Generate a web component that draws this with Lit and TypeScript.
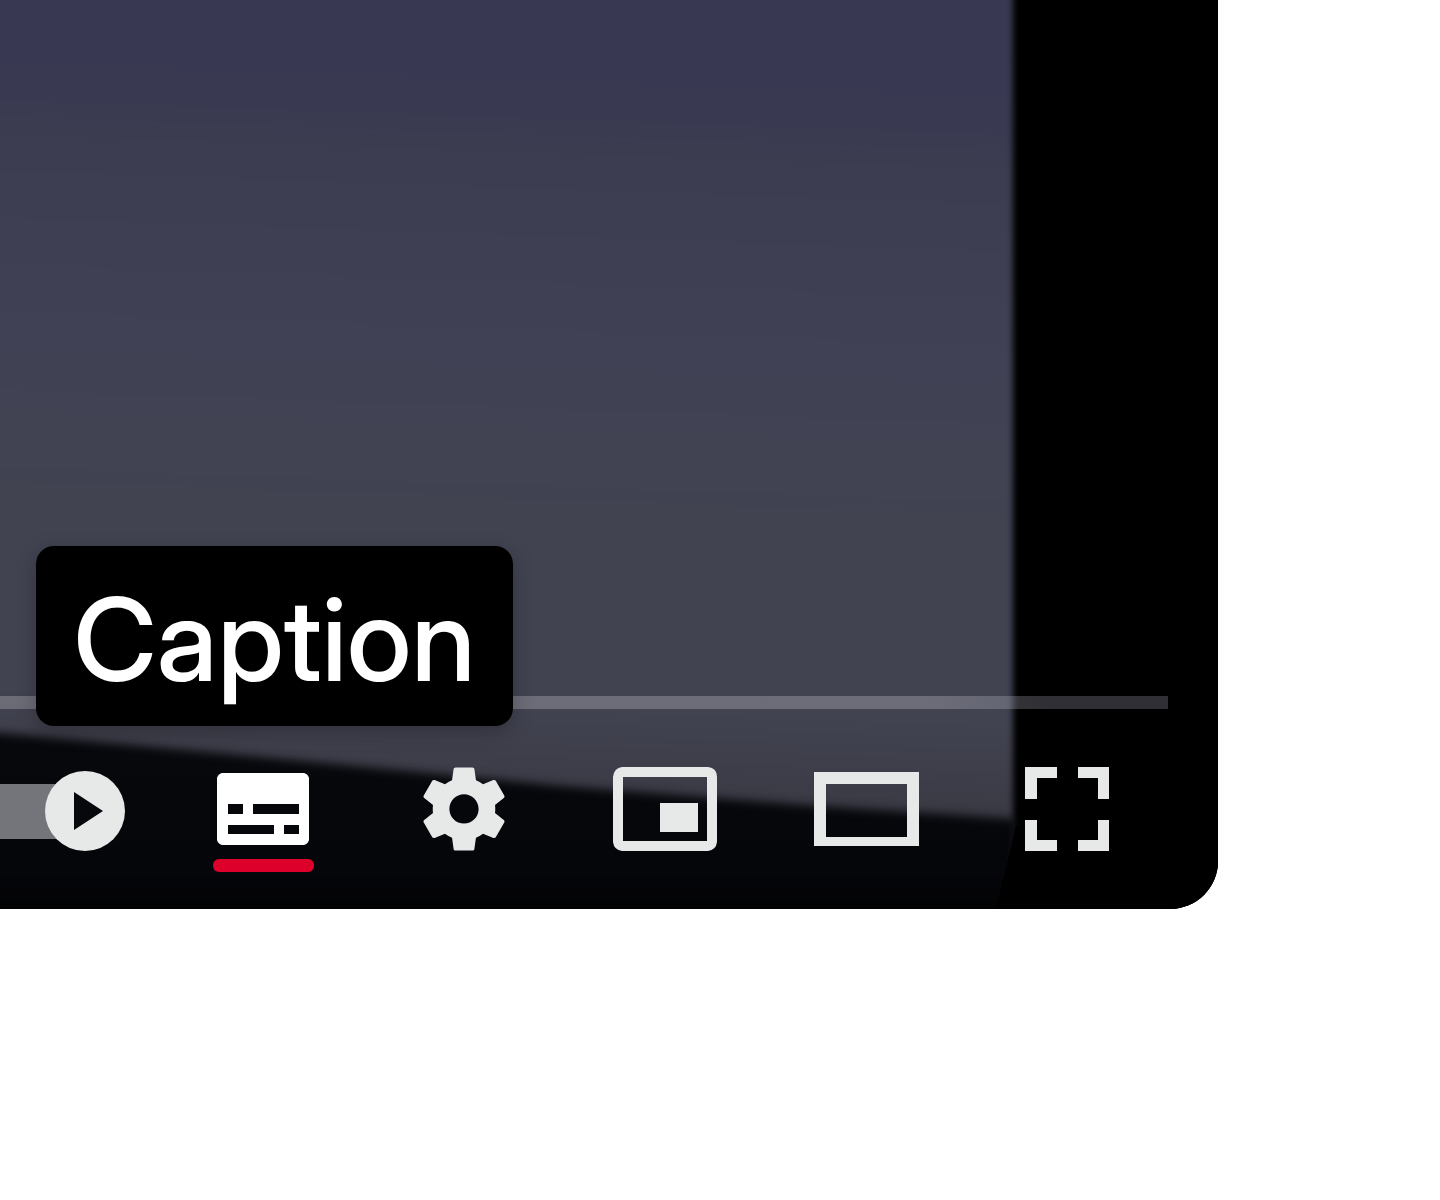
import { LitElement, html, css, svg } from "lit";
import { customElement, property } from "lit/decorators.js";

type IconName = "captions" | "settings" | "miniplayer" | "theater" | "fullscreen";

const icons = {
  captions: svg`
    <path class="bright" fill-rule="evenodd" d="M59 64h82q4 1 5 5v62q-1 4-5 5H59q-4-1-5-5V69q1-4 5-5z
      M65 95v10h15V95z M90 95v10h46V95z
      M65 116v9h46v-9z M121 116v9h15v-9z"/>
    <rect class="active" x="50" y="150" width="101" height="13" rx="6"/>`,
  settings: svg`
    <path transform="translate(100 100) scale(5.22) translate(-18 -18)" d="m 23.94,18.78 c .03,-0.25 .05,-0.51 .05,-0.78 0,-0.27 -0.02,-0.52 -0.05,-0.78 l 1.68,-1.32 c .15,-0.12 .19,-0.33 .09,-0.51 l -1.6,-2.76 c -0.09,-0.17 -0.31,-0.24 -0.48,-0.17 l -1.99,.8 c -0.41,-0.32 -0.86,-0.58 -1.35,-0.78 l -0.30,-2.12 c -0.02,-0.19 -0.19,-0.33 -0.39,-0.33 l -3.2,0 c -0.2,0 -0.36,.14 -0.39,.33 l -0.30,2.12 c -0.48,.2 -0.93,.47 -1.35,.78 l -1.99,-0.8 c -0.18,-0.07 -0.39,0 -0.48,.17 l -1.6,2.76 c -0.10,.17 -0.05,.39 .09,.51 l 1.68,1.32 c -0.03,.25 -0.05,.52 -0.05,.78 0,.26 .02,.52 .05,.78 l -1.68,1.32 c -0.15,.12 -0.19,.33 -0.09,.51 l 1.6,2.76 c .09,.17 .31,.24 .48,.17 l 1.99,-0.8 c .41,.32 .86,.58 1.35,.78 l .30,2.12 c .02,.19 .19,.33 .39,.33 l 3.2,0 c .2,0 .36,-0.14 .39,-0.33 l .30,-2.12 c .48,-0.2 .93,-0.47 1.35,-0.78 l 1.99,.8 c .18,.07 .39,0 .48,-0.17 l 1.6,-2.76 c .09,-0.17 .05,-0.39 -0.09,-0.51 l -1.68,-1.32 z m -5.94,2.01 c -1.54,0 -2.8,-1.25 -2.8,-2.8 0,-1.54 1.25,-2.8 2.8,-2.8 1.54,0 2.8,1.25 2.8,2.8 0,1.54 -1.25,2.8 -2.8,2.8 z"/>`,
  miniplayer: svg`
    <path fill-rule="evenodd" d="M57 58h86q9 1 9 10v65q-1 8-9 9H57q-8-1-9-9V68q1-9 9-10z
      M58 68v64h84V68z M95 94h38v29H95z"/>`,
  theater: svg`
    <path fill-rule="evenodd" d="M48 63h105v74H48z M60 75v53h81V75z"/>`,
  fullscreen: svg`
    <path d="M58 58h32v11H70v21H58z M111 58h31v32h-11V69h-20z
      M58 111h12v20h20v11H58z M131 111h11v31h-31v-11h20z"/>`,
};

@customElement("player-button")
class PlayerButton extends LitElement {
  @property() icon: IconName = "settings";
  @property() label = "";

  static styles = css`
    :host {
      display: block;
      flex: none;
    }
    .button {
      display: block;
      padding: 0;
      border: 0;
      background: none;
      cursor: pointer;
    }
    .icon {
      display: block;
      width: 201px;
      height: 200px;
      fill: #e7e9e8;
    }
    .bright {
      fill: #fff;
    }
    .active {
      fill: #dc002b;
    }
  `;

  render() {
    return html`
      <button class="button" type="button" aria-label=${this.label}>
        <svg class="icon" viewBox="0 0 201 200" aria-hidden="true">${icons[this.icon]}</svg>
      </button>
    `;
  }
}

@customElement("video-scene")
class VideoScene extends LitElement {
  static styles = css`
    :host,
    .scene {
      display: block;
      width: 100%;
      height: 100%;
    }
  `;

  render() {
    return html`
      <svg class="scene" viewBox="0 0 1218 909" preserveAspectRatio="none" aria-hidden="true">
        <defs>
          <linearGradient id="dusk" gradientUnits="userSpaceOnUse" x1="28" y1="0" x2="0" y2="820">
            <stop offset="0" stop-color="#383853" />
            <stop offset="0.11" stop-color="#393952" />
            <stop offset="0.17" stop-color="#3c3d50" />
            <stop offset="0.4" stop-color="#404154" />
            <stop offset="0.62" stop-color="#424351" />
            <stop offset="0.84" stop-color="#424351" />
            <stop offset="0.91" stop-color="#3d3e49" />
            <stop offset="1" stop-color="#34363e" />
          </linearGradient>
          <linearGradient id="ground" x1="0" y1="0" x2="0" y2="1">
            <stop offset="0" stop-color="#07080c" />
            <stop offset="0.6" stop-color="#05060a" />
            <stop offset="0.8" stop-color="#020203" />
          </linearGradient>
          <filter id="soft" x="-10%" y="-20%" width="120%" height="140%" color-interpolation-filters="sRGB">
            <feGaussianBlur stdDeviation="5" />
          </filter>
          <filter id="edge" x="-10%" y="-10%" width="120%" height="120%" color-interpolation-filters="sRGB">
            <feGaussianBlur stdDeviation="3" />
          </filter>
        </defs>
        <rect width="1218" height="909" fill="#000" />
        <rect x="-40" y="-40" width="1053" height="1000" fill="url(#dusk)" filter="url(#edge)" />
        <path d="M-40 731L0 733L260 757L560 786L800 805L1016 819V960H-40z" fill="url(#ground)" filter="url(#soft)" />
        <path d="M1016 826L996 909H1218V826z" fill="#000" />
      </svg>
    `;
  }
}

@customElement("app-root")
class AppRoot extends LitElement {
  static styles = css`
    :host {
      display: block;
      background: #fff;
      font-family: "Inter Display", Inter, "Liberation Sans", sans-serif;
    }
    .page {
      display: flex;
      box-sizing: border-box;
      min-height: 100vh;
      padding: 0 222px 291px 0;
    }
    .player {
      position: relative;
      display: flex;
      flex: 1;
      flex-direction: column;
      justify-content: flex-end;
      min-width: 0;
      border-radius: 0 0 48px 0;
      background: #000;
    }
    .backdrop {
      position: absolute;
      inset: 0;
      overflow: hidden;
      border-radius: inherit;
    }
    .chrome {
      position: relative;
      padding-right: 50px;
    }
    .seek {
      display: block;
      box-sizing: border-box;
      width: 100%;
      height: 13px;
      margin: 0;
      appearance: none;
      background: linear-gradient(to right, rgba(200, 200, 205, 0.31) 80%, rgba(200, 200, 225, 0.23) 90%);
    }
    .seek::-webkit-slider-thumb {
      appearance: none;
      width: 1px;
      height: 1px;
      opacity: 0;
    }
    .controls {
      display: flex;
      justify-content: flex-end;
    }
    .autoplay {
      display: flex;
      flex: 1;
      justify-content: flex-end;
      min-width: 0;
      padding: 0;
      border: 0;
      background: none;
      overflow: hidden;
      cursor: pointer;
    }
    .switch {
      display: block;
      flex: none;
      width: 163px;
      height: 200px;
    }
    .captions {
      position: relative;
      flex: none;
    }
    .tooltip {
      position: absolute;
      left: -127px;
      bottom: 183px;
      display: flex;
      justify-content: center;
      box-sizing: border-box;
      min-width: 477px;
      padding: 24px 20px 16px;
      border-radius: 18px;
      background: #000;
      box-shadow: 0 6px 20px rgba(0, 0, 0, 0.25);
      color: #fff;
      font-size: 115px;
      font-variation-settings: "opsz" 32;
      font-weight: 500;
      line-height: 140px;
      white-space: nowrap;
    }
  `;

  render() {
    return html`
      <main class="page">
        <section class="player" aria-label="Video player">
          <div class="backdrop"><video-scene></video-scene></div>
          <div class="chrome">
            <input class="seek" type="range" min="0" max="100" value="0" aria-label="Seek" />
            <div class="controls">
              <button class="autoplay" type="button" role="switch" aria-checked="true" aria-label="Autoplay">
                <svg class="switch" viewBox="0 0 163 200" aria-hidden="true">
                  <rect x="-60" y="75" width="150" height="55" rx="27" fill="#74747b" />
                  <circle cx="85" cy="102" r="40" fill="#e7e9e8" />
                  <path d="M74 83L103 102L74 121z" fill="#07080c" />
                </svg>
              </button>
              <div class="captions">
                <player-button icon="captions" label="Subtitles"></player-button>
                <div class="tooltip" role="tooltip">Caption</div>
              </div>
              <player-button icon="settings" label="Settings"></player-button>
              <player-button icon="miniplayer" label="Miniplayer"></player-button>
              <player-button icon="theater" label="Theater mode"></player-button>
              <player-button icon="fullscreen" label="Full screen"></player-button>
            </div>
          </div>
        </section>
      </main>
    `;
  }
}
